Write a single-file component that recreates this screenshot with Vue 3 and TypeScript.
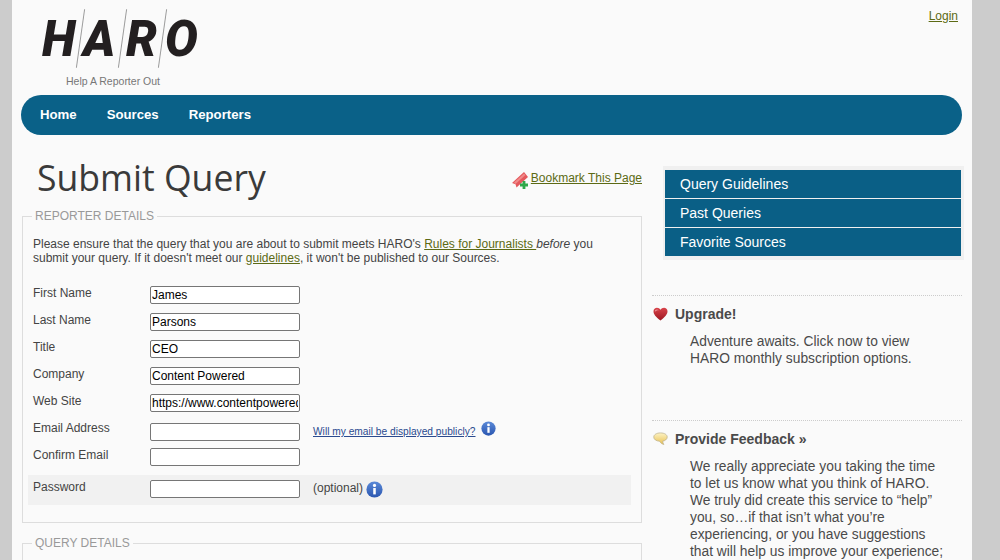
<script setup lang="ts">
interface Field { label: string; value: string }
const topFields: Field[] = [
  { label: 'First Name', value: 'James' },
  { label: 'Last Name', value: 'Parsons' },
  { label: 'Title', value: 'CEO' },
  { label: 'Company', value: 'Content Powered' },
  { label: 'Web Site', value: 'https://www.contentpowered.com' },
]
const sideLinks: string[] = ['Query Guidelines', 'Past Queries', 'Favorite Sources']
const navLinks: string[] = ['Home', 'Sources', 'Reporters']
</script>

<template>
  <div class="page">
    <header class="top">
      <div class="logo">
        <div class="logo-word">
          <span class="l-h">H</span><i class="slash"></i><span class="l-a">A</span><i class="slash"></i><span class="l-r">R</span><i class="slash"></i><span class="l-o">O</span>
        </div>
        <div class="logo-tag">Help A Reporter Out</div>
      </div>
      <a class="login" href="#">Login</a>
    </header>
    <nav class="nav">
      <a v-for="n in navLinks" :key="n" href="#">{{ n }}</a>
    </nav>
    <div class="columns">
      <main class="main">
        <div class="title-row">
          <h1>Submit Query</h1>
          <div class="bookmark">
            <svg width="18" height="18" viewBox="0 0 18 18">
              <path d="M1 12 L13 1 L17 6 L5.5 16.5 L4.5 13.2 Z" fill="#e4585c" />
              <path d="M3 11.5 L13 2.5 L14.5 4 L4.5 13 Z" fill="#f08a8a" />
              <path d="M11.6 10h2.8v2.6H17v2.8h-2.6V18h-2.8v-2.6H9v-2.8h2.6z" fill="#2fa84a" />
            </svg>
            <a href="#">Bookmark This Page</a>
          </div>
        </div>
        <fieldset class="box">
          <legend>REPORTER DETAILS</legend>
          <p class="intro">
            Please ensure that the query that you are about to submit meets HARO's
            <a href="#">Rules for Journalists </a><em>before</em> you submit your query. If it doesn't meet our
            <a href="#">guidelines</a>, it won't be published to our Sources.
          </p>
          <div class="rows">
            <div v-for="f in topFields" :key="f.label" class="row">
              <label>{{ f.label }}</label>
              <input type="text" :value="f.value" />
            </div>
            <div class="row">
              <label>Email Address</label>
              <input class="email" type="text" />
              <a class="public" href="#">Will my email be displayed publicly?</a>
              <svg class="info up" width="15" height="15" viewBox="0 0 16 16">
                <defs>
                  <linearGradient id="infoA" x1="0" y1="0" x2="0" y2="1">
                    <stop offset="0" stop-color="#5b8ad8" />
                    <stop offset="1" stop-color="#2a56b0" />
                  </linearGradient>
                </defs>
                <circle cx="8" cy="8" r="7.6" fill="url(#infoA)" />
                <circle cx="8" cy="4.2" r="1.5" fill="#fff" />
                <rect x="6.8" y="6.6" width="2.4" height="6" fill="#fff" />
              </svg>
            </div>
            <div class="row tall">
              <label>Confirm Email</label>
              <input type="text" />
            </div>
            <div class="row pass">
              <label>Password</label>
              <input type="password" />
              <span class="opt">(optional)</span>
              <svg class="info" width="17" height="17" viewBox="0 0 16 16">
                <circle cx="8" cy="8" r="7.6" fill="url(#infoA)" />
                <circle cx="8" cy="4.2" r="1.5" fill="#fff" />
                <rect x="6.8" y="6.6" width="2.4" height="6" fill="#fff" />
              </svg>
            </div>
          </div>
        </fieldset>
        <fieldset class="box second">
          <legend>QUERY DETAILS</legend>
        </fieldset>
      </main>
      <aside class="side">
        <div class="side-menu">
          <a v-for="s in sideLinks" :key="s" href="#">{{ s }}</a>
        </div>
        <section class="promo upgrade">
          <h3>
            <svg width="15" height="14" viewBox="0 0 16 15">
              <defs>
                <linearGradient id="heart" x1="0" y1="0" x2="0" y2="1">
                  <stop offset="0" stop-color="#d9434a" />
                  <stop offset="1" stop-color="#9c1620" />
                </linearGradient>
              </defs>
              <path d="M8 14.5 C3 10.5 .5 8 .5 4.6 C.5 2.2 2.3 .8 4.2 .8 C5.8 .8 7.2 1.6 8 3 C8.8 1.6 10.2 .8 11.8 .8 C13.7 .8 15.5 2.2 15.5 4.6 C15.5 8 13 10.5 8 14.5Z" fill="url(#heart)" />
              <path d="M2 4 C3 2.4 5 2.2 6.2 3.6 C4.4 3.4 3 4 2 5.2Z" fill="#ef9a9e" />
            </svg>
            <span>Upgrade!</span>
          </h3>
          <p>Adventure awaits. Click now to view HARO monthly subscription options.</p>
        </section>
        <section class="promo">
          <h3>
            <svg width="15" height="14" viewBox="0 0 16 15">
              <defs>
                <linearGradient id="bubble" x1="0" y1="0" x2="0" y2="1">
                  <stop offset="0" stop-color="#fdf3c4" />
                  <stop offset="1" stop-color="#e8bf50" />
                </linearGradient>
              </defs>
              <path d="M8 1 C12.2 1 15.2 2.8 15.2 5.4 C15.2 8 12.4 9.6 10.4 9.8 C10.4 11.2 10.8 12.4 11.6 13.4 C9.4 12.8 7.8 11.4 7 9.9 C3.4 9.7 .8 8 .8 5.4 C.8 2.8 3.8 1 8 1Z" fill="url(#bubble)" stroke="#bdb18c" stroke-width=".8" />
            </svg>
            <span>Provide Feedback »</span>
          </h3>
          <p>We really appreciate you taking the time to let us know what you think of HARO. We truly did create this service to “help” you, so…if that isn’t what you’re experiencing, or you have suggestions that will help us improve your experience;</p>
        </section>
      </aside>
    </div>
  </div>
</template>

<style scoped>
.page {
  width: 960px;
  height: 560px;
  margin-left: 12px;
  background: #fafafa;
  overflow: hidden;
  font-family: "Liberation Sans", Arial, sans-serif;
  color: #444;
  position: relative;
}
.top {
  display: flex;
  justify-content: space-between;
  height: 95px;
  padding: 8px 14px 0 30px;
  box-sizing: border-box;
}
.logo { width: 160px; }
.logo-word {
  display: flex;
  align-items: center;
  height: 61px;
  font: italic 900 49px "Roboto", "Liberation Sans", sans-serif;
  color: #231f20;
  line-height: 61px;
}
.l-h, .l-a, .l-r, .l-o { display: block; padding-top: 2px; }
.slash {
  display: block;
  flex: none;
  width: 1px;
  height: 59px;
  background: #9a9a9a;
  transform: rotate(8deg);
}
.l-h { width: 36px; margin-right: 2px; }
.l-a { width: 36px; margin-left: 2px; margin-right: 3px; }
.l-r { width: 32px; margin-left: 3px; margin-right: 4px; }
.l-o { margin-left: 2px; }
.logo-tag {
  font-size: 10.5px;
  color: #777;
  margin: 6px 0 0 24px;
  line-height: 12px;
}
.login {
  font-size: 12px;
  color: #5c6a14;
  margin-top: 1px;
  line-height: 14px;
}
.nav {
  display: flex;
  align-items: center;
  gap: 30px;
  margin: 0 10px 0 9px;
  height: 40px;
  padding: 0 0 2px 19px;
  box-sizing: border-box;
  background: #0a6188;
  border-radius: 20px;
}
.nav a {
  color: #fff;
  font-size: 13.2px;
  font-weight: 700;
  text-decoration: none;
}
.columns {
  display: flex;
  padding: 0 10px;
  gap: 10px;
}
.main { width: 620px; flex: none; }
.title-row {
  display: flex;
  justify-content: space-between;
  height: 74px;
  padding: 0 0 0 15px;
}
h1 {
  margin: 18px 0 0;
  font: 400 35.6px/48px "Open Sans", "Noto Sans", sans-serif;
  color: #3a3a3a;
}
.bookmark {
  display: flex;
  align-items: flex-start;
  gap: 2px;
  margin-top: 36px;
  font-size: 12px;
  line-height: 14px;
}
.bookmark svg { margin: 0 0 0 -1px; }
.bookmark a, .intro a { color: #5c6a14; }
.box {
  margin: 0;
  padding: 0 10px;
  border: 1px solid #ddd;
  min-width: 0;
}
legend {
  font-size: 12px;
  color: #999;
  padding: 0 3px 0 3px;
  margin-left: -1px;
  line-height: 14px;
}
.intro {
  margin: 14px 0 0;
  font-size: 12px;
  line-height: 14px;
  color: #444;
}
.rows { margin-top: 20px; padding-bottom: 17px; }
.row {
  display: flex;
  align-items: flex-start;
  height: 27px;
}
.row.tall { height: 28px; }
.row label {
  width: 117px;
  flex: none;
  font-size: 12px;
  line-height: 14px;
  margin-top: 1px;
}
.row input {
  width: 150px;
  height: 18px;
  margin: 1px 0 0;
  box-sizing: border-box;
  padding: 0 1px;
  border: 1px solid #767676;
  border-radius: 2px;
  background: #fff;
  font: 12px "Liberation Sans", Arial, sans-serif;
  color: #000;
}
.row input.email { margin-top: 3px; }
.public {
  margin: 6px 0 0 13px;
  font-size: 10.2px;
  line-height: 12px;
  color: #2a4a8f;
}
.info { flex: none; }
.info.up { margin: 1px 0 0 5px; }
.row.pass {
  height: 30px;
  margin: 0 0 0 -5px;
  padding: 5px 0 0 5px;
  background: #f1f1f1;
  box-sizing: border-box;
  width: 603px;
}
.pass label { margin-top: 0; }
.pass input { margin-top: 0; }
.opt {
  margin: 1px 3px 0 13px;
  font-size: 12px;
  line-height: 14px;
}
.pass .info { margin-top: 1px; }
.second { margin-top: 13px; height: 40px; }
.side { width: 310px; flex: none; }
.side-menu {
  display: flex;
  flex-direction: column;
  gap: 1px;
  margin: 31px 0 0 11px;
  padding: 4px 3px 4px 2px;
  width: 301px;
  box-sizing: border-box;
  background: #f0f0f0;
}
.side-menu a {
  height: 28px;
  padding-left: 15px;
  background: #0a5f86;
  color: #fff;
  font-size: 14px;
  line-height: 28px;
  text-decoration: none;
}
.promo {
  width: 310px;
  border-top: 1px dotted #ccc;
  padding-top: 9px;
}
.upgrade { margin-top: 35px; height: 125px; box-sizing: border-box; }
.promo h3 {
  display: flex;
  align-items: center;
  gap: 7px;
  margin: 0;
  font-size: 14px;
  line-height: 18px;
  color: #4a4a4a;
}
.promo h3 svg { flex: none; margin-left: 1px; }
.promo p {
  margin: 10px 0 0 38px;
  width: 255px;
  font-size: 13.8px;
  line-height: 17px;
  color: #4a4a4a;
}
</style>

<style>
body { background: #ccc; overflow: hidden; }
</style>
